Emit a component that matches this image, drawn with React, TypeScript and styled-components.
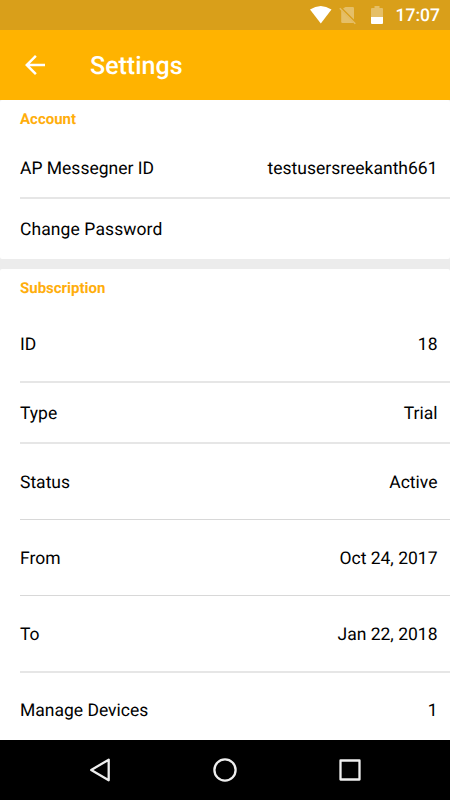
import React from "react";
import styled, { createGlobalStyle } from "styled-components";

const GlobalStyle = createGlobalStyle`
  * { box-sizing: border-box; }
  body {
    margin: 0;
    background: #ececec;
    font-family: Roboto, "Liberation Sans", sans-serif;
    text-rendering: geometricPrecision;
    color: #000;
  }
`;

const Screen = styled.div`
  display: flex;
  flex-direction: column;
  width: 450px;
  height: 800px;
  overflow: hidden;
  background: #ececec;
`;

const StatusBar = styled.div`
  display: flex;
  align-items: center;
  justify-content: flex-end;
  flex: none;
  height: 30px;
  padding-right: 10px;
  background: #d99f1a;
`;

const StatusIcons = styled.svg`
  display: block;
  width: 86px;
  height: 30px;
`;

const Clock = styled.time`
  font-size: 17.5px;
  font-weight: 500;
  line-height: 30px;
  padding-top: 2px;
  color: #fff;
`;

const AppBar = styled.header`
  display: flex;
  align-items: center;
  flex: none;
  height: 70px;
  padding-left: 20px;
  gap: 40px;
  background: #ffb300;
`;

const BackButton = styled.button`
  display: flex;
  width: 30px;
  height: 30px;
  padding: 0;
  border: 0;
  background: none;
`;

const Title = styled.h1`
  margin: 0;
  font-size: 25px;
  font-weight: 500;
  line-height: 30px;
  padding-top: 4px;
  color: #fff;
`;

const Content = styled.main`
  display: flex;
  flex-direction: column;
  flex: 1;
  gap: 10px;
  min-height: 0;
  overflow: hidden;
`;

const Card = styled.section`
  flex: none;
  background: #fff;
  border-radius: 2px;
`;

const CardTitle = styled.h2`
  margin: 0;
  height: 38px;
  padding-left: 20px;
  font-size: 15px;
  font-weight: 700;
  line-height: 38px;
  color: #ffae0c;
`;

type Divider = "none" | "thin" | "soft";

const dividers: Record<Divider, string> = {
  none: "0",
  thin: "1px solid #d8d8d8",
  soft: "2px solid #e6e6e6",
};

const Row = styled.div<{ $height: number; $top: number; $divider: Divider }>`
  display: flex;
  align-items: flex-start;
  justify-content: space-between;
  height: ${(p) => p.$height}px;
  margin-left: 20px;
  padding-top: ${(p) => p.$top}px;
  padding-right: 12.5px;
  border-bottom: ${(p) => dividers[p.$divider]};
  font-size: 17.5px;
  line-height: 21px;
`;

const Label = styled.span<{ $action?: boolean }>`
  letter-spacing: ${(p) => (p.$action ? "0.1px" : "normal")};
`;

const Value = styled.span`
  text-align: right;
`;

const NavBar = styled.nav`
  display: flex;
  align-items: center;
  justify-content: center;
  flex: none;
  height: 60px;
  gap: 95px;
  background: #000;
`;

const NavIcon = styled.svg`
  display: block;
  width: 30px;
  height: 30px;
  fill: none;
  stroke: #eee;
  stroke-width: 2.3;
  stroke-linejoin: round;
`;

type Item = { label: string; value?: string; height: number; top: number; divider: Divider };

const sections: { title: string; items: Item[] }[] = [
  {
    title: "Account",
    items: [
      { label: "AP Messegner ID", value: "testusersreekanth661", height: 61, top: 21, divider: "soft" },
      { label: "Change Password", height: 60, top: 21, divider: "none" },
    ],
  },
  {
    title: "Subscription",
    items: [
      { label: "ID", value: "18", height: 76, top: 28, divider: "soft" },
      { label: "Type", value: "Trial", height: 61, top: 21, divider: "soft" },
      { label: "Status", value: "Active", height: 76, top: 29, divider: "thin" },
      { label: "From", value: "Oct 24, 2017", height: 76, top: 29, divider: "thin" },
      { label: "To", value: "Jan 22, 2018", height: 77, top: 29, divider: "soft" },
      { label: "Manage Devices", value: "1", height: 75, top: 28, divider: "none" },
    ],
  },
];

export default function App() {
  return (
    <>
      <GlobalStyle />
      <Screen>
        <StatusBar>
          <StatusIcons viewBox="0 0 86 30">
            <path d="M0 9.600Q10.700 2.400 21.500 9.600L10.800 23.500Z" fill="#fff" />
            <g fill="#e5bf68">
              <path d="M35.500 7H42.800Q44 7 44 8.200V19.500L33 8.500Z" />
              <path d="M31.200 10.500L43.200 22.500Q43 23 42.500 23H32.400Q31.200 23 31.200 21.800Z" />
            </g>
            <path d="M29.800 8.300L45.300 23.800" stroke="#e5bf68" strokeWidth="1.500" />
            <path d="M64.500 6H69.500V8H72Q73 8 73 9V17H61V9Q61 8 62 8H64.500Z" fill="#e5bf68" />
            <path d="M61 17H73V23Q73 24 72 24H62Q61 24 61 23Z" fill="#fff" />
          </StatusIcons>
          <Clock>17:07</Clock>
        </StatusBar>
        <AppBar>
          <BackButton aria-label="Back">
            <svg width="30" height="30" viewBox="0 0 24 24" fill="#fff">
              <path d="M20 11H7.830l5.590-5.590L12 4l-8 8 8 8 1.410-1.410L7.830 13H20v-2z" />
            </svg>
          </BackButton>
          <Title>Settings</Title>
        </AppBar>
        <Content>
          {sections.map((section) => (
            <Card key={section.title}>
              <CardTitle>{section.title}</CardTitle>
              {section.items.map((item) => (
                <Row key={item.label} $height={item.height} $top={item.top} $divider={item.divider}>
                  <Label $action={!item.value}>{item.label}</Label>
                  {item.value && <Value>{item.value}</Value>}
                </Row>
              ))}
            </Card>
          ))}
        </Content>
        <NavBar>
          <NavIcon viewBox="0 0 30 30">
            <path d="M23.700 4.700V25.300L6.200 15Z" />
          </NavIcon>
          <NavIcon viewBox="0 0 30 30">
            <circle cx="15" cy="15" r="10.600" />
          </NavIcon>
          <NavIcon viewBox="0 0 30 30">
            <rect x="5.500" y="5.500" width="19" height="19" />
          </NavIcon>
        </NavBar>
      </Screen>
    </>
  );
}
